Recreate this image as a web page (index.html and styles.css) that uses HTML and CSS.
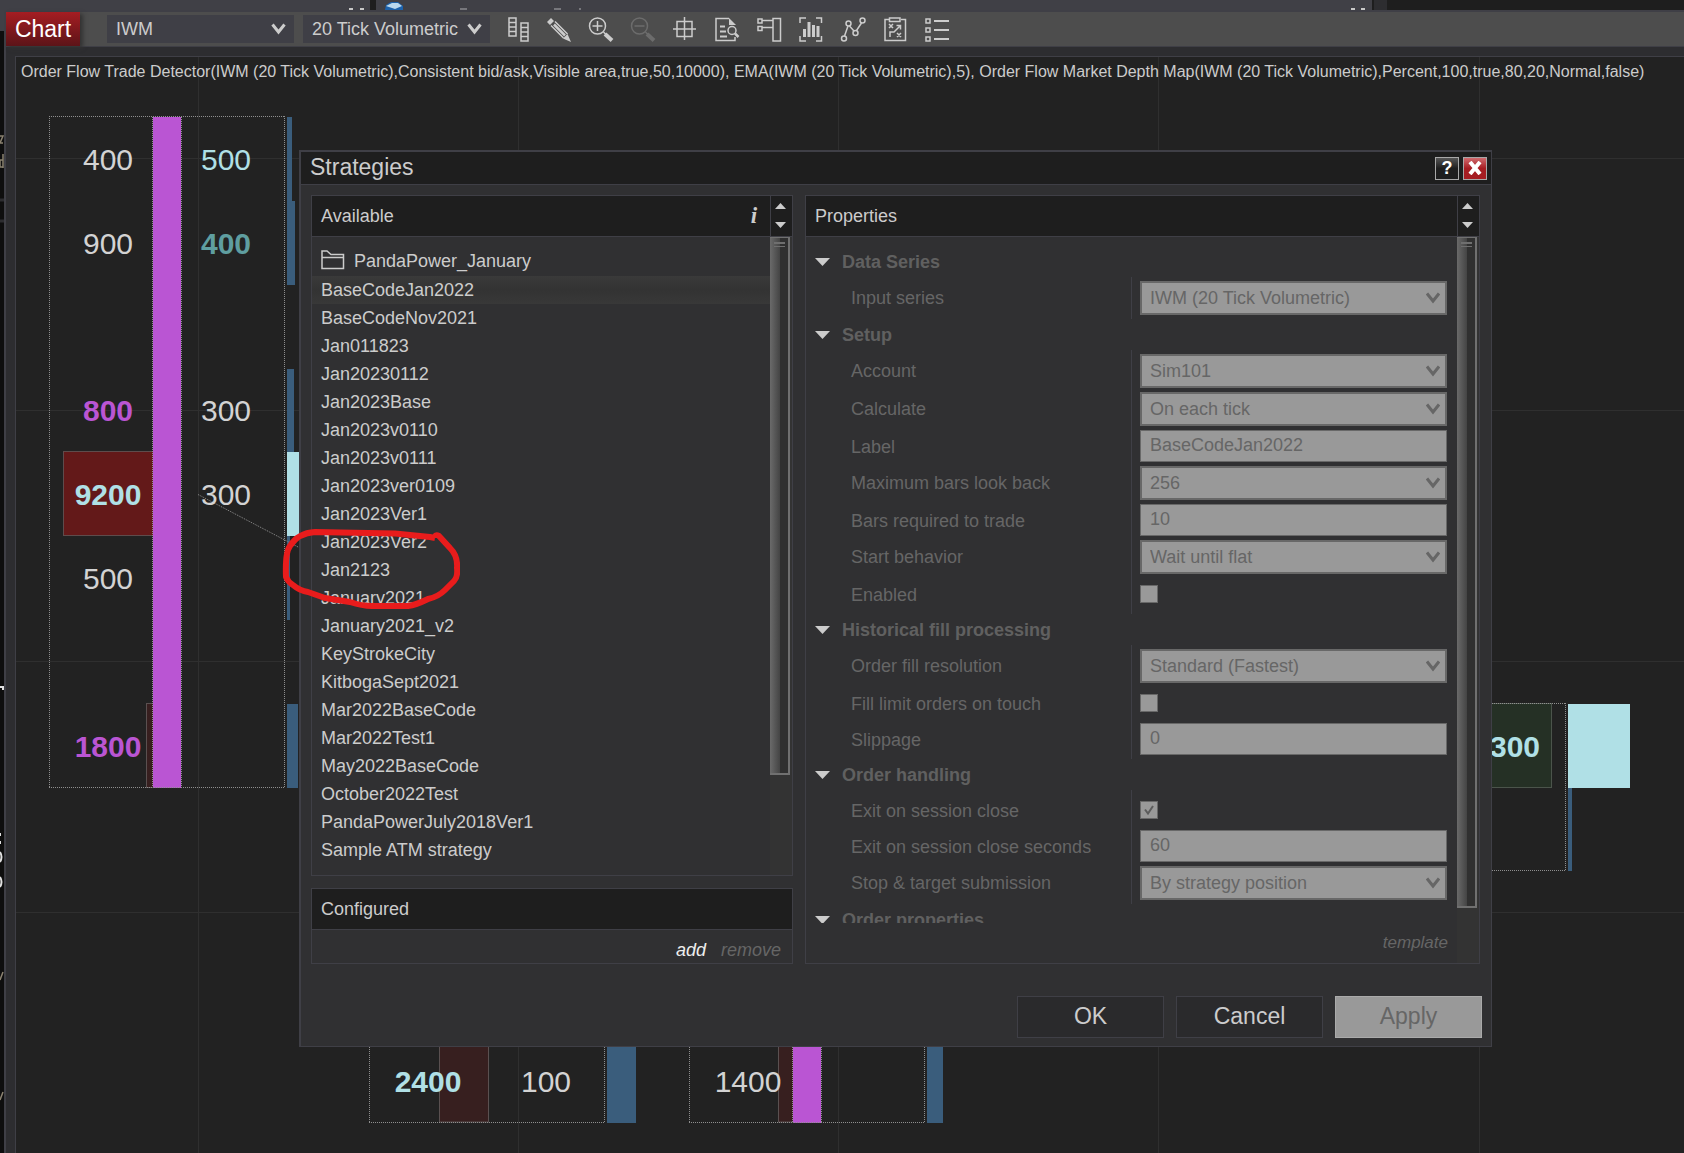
FILE: index.html
```html
<!DOCTYPE html>
<html lang="en">
<head>
<meta charset="utf-8">
<title>Chart - Strategies</title>
<link rel="stylesheet" href="styles.css">
</head>
<body>
<svg class="symbols" width="0" height="0" aria-hidden="true">
  <symbol id="chevron" viewBox="0 0 14 12"><path d="M1 1.5L7 9L13 1.5" fill="none" stroke="currentColor" stroke-width="3"/></symbol>
  <symbol id="arrow-down" viewBox="0 0 15 8"><path d="M0 0H15L7.5 8Z" fill="currentColor"/></symbol>
  <symbol id="arrow-up" viewBox="0 0 15 8"><path d="M0 8H15L7.5 0Z" fill="currentColor"/></symbol>
</svg>

<div class="desktop">
  <div class="behind-top" aria-hidden="true">
    <svg width="100%" height="10">
      <rect x="370" width="6" height="10" fill="#1e1e1e"/>
      <rect x="1372" width="2" height="10" fill="#1e1e1e"/>
      <rect x="1374" width="13" height="10" fill="#2d2d30"/>
      <rect x="1387" width="100%" height="10" fill="#1e1e1e"/>
      <path d="M349 9h4M360 9h4M1351 9h4M1361 9h4" stroke="#c8c8c8" stroke-width="2"/>
      <path d="M460 9h7M554 9h7M579 9h2" stroke="#77777c" stroke-width="2"/>
      <path d="M385 10L386 5L391 2H398L403 6V10Z" fill="#1d62ab"/>
      <path d="M386 6L392 3H398L402 6L395 9Z" fill="#b9d8ee"/>
    </svg>
  </div>
  <div class="behind-left" aria-hidden="true">
    <svg width="4" height="100%">
      <rect width="4" height="21" fill="#404046"/>
      <path d="M0 190h4M0 211h4" stroke="#2d2d30" stroke-width="3"/>
      <g fill="none" stroke="#8b8270" stroke-width="1.5"><path d="M0 126h3L0 133h3M3 144V158M3 150H0V157H3"/><path d="M3 962L0 970M3 1082L0 1090"/></g>
      <g fill="none" stroke="#e0e0e0" stroke-width="2"><path d="M0 677h3v3M0 823v3M0 831v3M0 842q3 5 0 10M0 867q3 5 0 10"/></g>
    </svg>
  </div>

  <main class="window">
    <header class="toolbar">
      <h1 class="tab">Chart</h1>
      <div class="picks">
        <div class="pick"><select aria-label="Instrument"><option>IWM</option></select><svg width="15" height="12"><use href="#chevron"/></svg></div>
        <div class="pick"><select aria-label="Interval"><option>20 Tick Volumetric</option></select><svg width="15" height="12"><use href="#chevron"/></svg></div>
      </div>
      <div class="tools">
        <button class="tool" aria-label="Chart trader"><svg viewBox="0 0 26 26"><path d="M3 2H10V20H3ZM3 6.5H10M3 11H10M3 15.5H10M15 7H22V25H15ZM15 11.5H22M15 16H22M15 20.5H22"/></svg></button>
        <button class="tool" aria-label="Drawing tools"><svg viewBox="0 0 26 26"><path class="fill" d="M-1 6L3 2L6 5L2 9ZM23 26L15 22.500L19.500 18Z"/><path d="M3 9.500L15.500 22M7 5.500L19.500 18"/><path d="M6 8.500L17 19.500" stroke-width="2.500"/></svg></button>
        <button class="tool" aria-label="Zoom in"><svg viewBox="0 0 26 26"><circle cx="7.500" cy="10" r="8"/><path d="M2.500 10H12.500M7.500 5V15"/><path d="M13.500 16L16 18.500"/><path d="M15 18L22 24.500" stroke-width="4"/></svg></button>
        <button class="tool" aria-label="Zoom out" disabled><svg viewBox="0 0 26 26"><circle cx="7.500" cy="10" r="8"/><path d="M2.500 10H12.500"/><path d="M13.500 16L16 18.500"/><path d="M15 18L22 24.500" stroke-width="4"/></svg></button>
        <button class="tool" aria-label="Crosshair"><svg viewBox="0 0 26 26"><path d="M3 5.500H18V20.500H3ZM10.500 1V24M-1 13H22"/></svg></button>
        <button class="tool" aria-label="Data box"><svg viewBox="0 0 26 26"><path d="M13 2.500H0V24.500H19V21"/><path class="fill" d="M13 2L20 9H13Z"/><path d="M4 10.500H9M4 15.500H10M4 20.500H11" stroke-width="2"/><circle cx="16" cy="14.500" r="4"/><path d="M19 17.500L22.500 21" stroke-width="2.500"/></svg></button>
        <button class="tool" aria-label="Properties link"><svg viewBox="0 0 26 26"><path d="M0 3H4V7H0ZM0 10.500H4V14.500H0ZM4 4.500H15M4 11.500H15M15 2.500H22.500V25H15Z"/></svg></button>
        <button class="tool" aria-label="Indicators"><svg viewBox="0 0 26 26"><path d="M0 7V2H6M16 2H21.500V7M0 20V25H6M16 25H21.500V20"/><path d="M4.500 13V21M9 6V21M13.500 9V21M18 10V21" stroke-width="3"/></svg></button>
        <button class="tool" aria-label="Strategies"><svg viewBox="0 0 26 26"><circle cx="2" cy="22.500" r="2.500"/><circle cx="6.500" cy="7.500" r="2.500"/><circle cx="13.500" cy="17" r="2.500"/><circle cx="20.500" cy="4.500" r="2.500"/><path d="M2.500 20L6 10M7.500 10L12 15M14.500 14.500L19.500 7"/></svg></button>
        <button class="tool" aria-label="Strategy performance"><svg viewBox="0 0 26 26"><path d="M5 3.500H1V24.500H21.500V3.500H17M5.500 2H16V5.500H5.500ZM5 8L9 12M9 8L5 12M13 17L17 21M17 17L13 21M6 21V16H10L16 10M12.500 9.500H16.500V13.500"/></svg></button>
        <button class="tool" aria-label="Menu"><svg viewBox="0 0 26 26"><path d="M0 3H4V7H0ZM0 12H4V16H0ZM0 21H4V25H0Z"/><path d="M8 5H23M8 14H23M8 23H23" stroke-width="2"/></svg></button>
      </div>
    </header>

    <section class="chart">
      <svg class="plot" width="100%" height="100%" role="img" aria-label="Volumetric chart">
        <g class="grid">
          <path d="M182.500 0V1200M502.500 0V1200M822.500 0V1200M1142.500 0V1200M1463.500 0V1200"/>
          <path d="M0 101.500H2400M0 353.500H2400M0 604.500H2400M0 855.500H2400"/>
        </g>
        <!-- first bar -->
        <rect class="ask" x="47.500" y="394.500" width="92" height="84"/>
        <rect class="dim" x="130.500" y="646.500" width="20" height="84"/>
        <rect class="poc" x="137" y="60" width="28" height="671"/>
        <path class="outline" d="M33 59.500H269M33 730.500H269M33.500 59V731M268.500 59V731M136.500 60V730M165.500 60V730"/>
        <path class="depth" d="M271 60h5v84h3v84h-8zM271 312h7v83h-7zM271 479h3v84h-3zM271 647h11v84h-11z"/>
        <rect class="peak" x="271" y="395" width="40" height="84"/>
        <path class="outline" d="M182 437.500L284 491"/>
        <!-- bars below the dialog -->
        <rect class="dim" x="423.500" y="900" width="49" height="165"/>
        <path class="outline" d="M353.500 900V1066M353 1065.500H589M588.500 900V1066"/>
        <rect class="dim" x="762.500" y="900" width="20" height="165"/>
        <rect class="poc" x="777" y="900" width="28" height="166"/>
        <path class="outline" d="M673.500 900V1066M673 1065.500H909M908.500 900V1066M776.500 900V1065M805.500 900V1065"/>
        <path class="depth" d="M591 900h29v166h-29zM911 900h16v166h-16z"/>
        <!-- last bar -->
        <rect class="bid" x="1400" y="646.500" width="135.500" height="84"/>
        <path class="outline" d="M1400 646.500H1550M1549.500 646V814M1400 813.500H1550"/>
        <rect class="peak" x="1552" y="647" width="62" height="84"/>
        <path class="depth" d="M1552 731h4v83h-4z"/>
        <g class="volume">
          <text x="92" y="113">400</text><text x="210" y="113" class="light">500</text>
          <text x="92" y="197">900</text><text x="210" y="197" class="teal">400</text>
          <text x="92" y="364" class="violet">800</text><text x="210" y="364">300</text>
          <text x="92" y="448" class="light strong">9200</text><text x="210" y="448">300</text>
          <text x="92" y="532">500</text>
          <text x="92" y="700" class="violet">1800</text>
          <text x="412" y="1035" class="light strong">2400</text><text x="530" y="1035">100</text>
          <text x="732" y="1035">1400</text>
          <text x="1499" y="700" class="light strong">300</text>
        </g>
      </svg>
      <p class="caption">Order Flow Trade Detector(IWM (20 Tick Volumetric),Consistent bid/ask,Visible area,true,50,10000), EMA(IWM (20 Tick Volumetric),5), Order Flow Market Depth Map(IWM (20 Tick Volumetric),Percent,100,true,80,20,Normal,false)</p>
    </section>
  </main>

  <div class="dialog" role="dialog" aria-labelledby="dialog-title">
    <header class="titlebar">
      <h2 id="dialog-title">Strategies</h2>
      <button class="help" aria-label="Help">?</button>
      <button class="close" aria-label="Close"><svg width="14" height="14" viewBox="0 0 14 14"><path d="M2 1L12 13M12 1L2 13" stroke="#fff" stroke-width="4"/></svg></button>
    </header>

    <div class="columns">
      <div class="left">
        <section class="panel available">
          <div class="panel-head">
            <h3>Available</h3>
            <button class="info" aria-label="Info">i</button>
            <div class="spin"><svg width="11" height="6"><use href="#arrow-up"/></svg><svg width="11" height="6"><use href="#arrow-down"/></svg></div>
          </div>
          <div class="panel-body">
            <ul class="list">
              <li class="folder"><svg width="24" height="20" viewBox="0 0 24 20"><path d="M1 18.500V1H6L10 4.500H22.500V18.500ZM1 7.500H22.500" fill="none" stroke="#ccc" stroke-width="1.500"/></svg>PandaPower_January</li>
              <li class="selected">BaseCodeJan2022</li>
              <li>BaseCodeNov2021</li>
              <li>Jan011823</li>
              <li>Jan20230112</li>
              <li>Jan2023Base</li>
              <li>Jan2023v0110</li>
              <li>Jan2023v0111</li>
              <li>Jan2023ver0109</li>
              <li>Jan2023Ver1</li>
              <li>Jan2023Ver2</li>
              <li>Jan2123</li>
              <li>January2021</li>
              <li>January2021_v2</li>
              <li>KeyStrokeCity</li>
              <li>KitbogaSept2021</li>
              <li>Mar2022BaseCode</li>
              <li>Mar2022Test1</li>
              <li>May2022BaseCode</li>
              <li>October2022Test</li>
              <li>PandaPowerJuly2018Ver1</li>
              <li>Sample ATM strategy</li>
            </ul>
            <div class="track"><div class="thumb short"></div></div>
          </div>
        </section>

        <section class="panel">
          <div class="panel-head"><h3>Configured</h3></div>
          <div class="actions"><a href="#add">add</a><a class="off" aria-disabled="true" href="#remove">remove</a></div>
        </section>
      </div>

      <section class="panel properties">
        <div class="panel-head">
          <h3>Properties</h3>
          <div class="spin"><svg width="11" height="6"><use href="#arrow-up"/></svg><svg width="11" height="6"><use href="#arrow-down"/></svg></div>
        </div>
        <div class="panel-body">
          <div class="props">
            <form class="fields">
              <h4 class="first"><svg width="15" height="8"><use href="#arrow-down"/></svg>Data Series</h4>
              <div class="group">
                <label for="series">Input series</label><div class="drop"><select id="series" disabled><option>IWM (20 Tick Volumetric)</option></select><svg width="14" height="12"><use href="#chevron"/></svg></div>
              </div>
              <h4><svg width="15" height="8"><use href="#arrow-down"/></svg>Setup</h4>
              <div class="group">
                <label for="account">Account</label><div class="drop"><select id="account" disabled><option>Sim101</option></select><svg width="14" height="12"><use href="#chevron"/></svg></div>
                <label for="calculate">Calculate</label><div class="drop"><select id="calculate" disabled><option>On each tick</option></select><svg width="14" height="12"><use href="#chevron"/></svg></div>
                <label for="label">Label</label><input type="text" id="label" value="BaseCodeJan2022" disabled>
                <label for="lookback">Maximum bars look back</label><div class="drop"><select id="lookback" disabled><option>256</option></select><svg width="14" height="12"><use href="#chevron"/></svg></div>
                <label for="required">Bars required to trade</label><input type="text" id="required" value="10" disabled>
                <label for="start">Start behavior</label><div class="drop"><select id="start" disabled><option>Wait until flat</option></select><svg width="14" height="12"><use href="#chevron"/></svg></div>
                <label for="enabled">Enabled</label><div class="tick"><input type="checkbox" id="enabled" disabled></div>
              </div>
              <h4><svg width="15" height="8"><use href="#arrow-down"/></svg>Historical fill processing</h4>
              <div class="group">
                <label for="resolution">Order fill resolution</label><div class="drop"><select id="resolution" disabled><option>Standard (Fastest)</option></select><svg width="14" height="12"><use href="#chevron"/></svg></div>
                <label for="touch">Fill limit orders on touch</label><div class="tick"><input type="checkbox" id="touch" disabled></div>
                <label for="slippage">Slippage</label><input type="text" id="slippage" value="0" disabled>
              </div>
              <h4><svg width="15" height="8"><use href="#arrow-down"/></svg>Order handling</h4>
              <div class="group">
                <label for="exit">Exit on session close</label><div class="tick"><input type="checkbox" id="exit" checked disabled><svg width="18" height="18" viewBox="0 0 18 18"><path d="M5 8.500L8 12.500L13 5" fill="none" stroke="#5c5c5c" stroke-width="2"/></svg></div>
                <label for="seconds">Exit on session close seconds</label><input type="text" id="seconds" value="60" disabled>
                <label for="submission">Stop &amp; target submission</label><div class="drop"><select id="submission" disabled><option>By strategy position</option></select><svg width="14" height="12"><use href="#chevron"/></svg></div>
              </div>
              <h4><svg width="15" height="8"><use href="#arrow-down"/></svg>Order properties</h4>
            </form>
            <a class="template" href="#template">template</a>
          </div>
          <div class="track"><div class="thumb long"></div></div>
        </div>
      </section>
    </div>

    <footer class="buttons">
      <button>OK</button>
      <button>Cancel</button>
      <button disabled>Apply</button>
    </footer>
  </div>

  <svg class="marker" width="180" height="90" viewBox="0 0 180 90" aria-hidden="true">
    <path d="M155 18L150 17L115 13.500L35 12Q18 13 10 26Q5 32 6 57Q8 62 13 65Q20 71 28 72L45 78L70 82Q82 86 92 86H128Q136 85 148 79Q158 77 165 70L174 61Q178 57 177 48Q178 36 170 28L159 16Q155 14 155 18" fill="none" stroke="#e81c1c" stroke-width="6" stroke-linejoin="round"/>
  </svg>
</div>
</body>
</html>
```

FILE: styles.css
```css
* { box-sizing: border-box; }

body {
  margin: 0;
  background: #0e0e0e;
  color: #ccc;
  font: 18px/28px "Liberation Sans", Arial, sans-serif;
}

h1, h2, h3, h4, p, ul { margin: 0; padding: 0; font-weight: normal; }
button, input, select { font: inherit; color: inherit; margin: 0; border-radius: 0; }
.symbols { position: absolute; }

.desktop {
  position: relative;
  display: grid;
  grid-template: 10px 1fr / 4px 1fr;
  min-height: 100vh;
  overflow: hidden;
}
.behind-top { grid-column: 1 / 3; background: #404046; height: 10px; overflow: hidden; }
.behind-top svg { display: block; }
.behind-left { background: #0e0e0e; position: relative; }
.behind-left svg { position: absolute; inset: 0; }

.window {
  display: flex;
  flex-direction: column;
  min-width: 0;
  background: #2d2d30;
  border: solid #3f3f46;
  border-width: 2px 0 0 2px;
}

.toolbar {
  display: flex;
  align-items: center;
  height: 35px;
  background: #4d4d4d;
  border-bottom: 1px solid #3f3f46;
}
.tab {
  align-self: stretch;
  width: 74px;
  color: #fff;
  font-size: 23px;
  line-height: 34px;
  text-align: center;
  background: linear-gradient(#a51d22, #5c1418);
  box-shadow: 3px 2px 4px #333;
}
.picks { display: flex; gap: 9px; margin: 0 16px 0 27px; }
.pick { display: grid; align-items: center; }
.pick > *, .drop > * { grid-area: 1 / 1; }
.pick select {
  appearance: none;
  width: 187px;
  height: 28px;
  padding: 0 9px;
  border: 0;
  background: #3f3f46;
  color: #ccc;
}
.pick svg { justify-self: end; margin-right: 8px; pointer-events: none; }
.tools { display: flex; gap: 16px; }
.tool { display: block; width: 26px; height: 26px; padding: 0; border: 0; background: none; color: #ccc; }
.tool:disabled { color: #6c6c6c; }
.tool svg { display: block; overflow: visible; fill: none; stroke: currentColor; stroke-width: 1.5; }
.tool .fill { fill: currentColor; stroke: none; }

.chart {
  position: relative;
  flex: 1;
  margin: 9px 0 0 9px;
  border: solid #3f3f46;
  border-width: 1px 0 0 1px;
  background: #222;
}
.plot { position: absolute; inset: 0; }
.caption { position: relative; padding: 1px 5px; font-size: 16px; white-space: nowrap; }
.grid path { fill: none; stroke: #2f2f2f; }
.outline { fill: none; stroke: #8f8f8f; stroke-dasharray: 1 1; }
.ask { fill: #631919; stroke: #5e4c4c; }
.dim { fill: #371f1f; stroke: #5a5050; }
.bid { fill: #253025; stroke: #4b544b; }
.poc { fill: #ba55d3; }
.depth { fill: #3a5d7c; }
.peak { fill: #b0e0e6; }
.volume { font-size: 30px; fill: #d3d3d3; text-anchor: middle; }
.light { fill: #b0e0e6; }
.teal { fill: #5f9ea0; font-weight: bold; }
.violet { fill: #ba55d3; font-weight: bold; }
.strong { font-weight: bold; }

.dialog {
  position: absolute;
  top: 150px;
  left: 299px;
  right: 192px;
  background: #303032;
  border: solid #3f3f46;
  border-width: 2px 1px 1px 2px;
}
.titlebar {
  display: flex;
  align-items: center;
  gap: 4px;
  height: 33px;
  padding: 0 4px 0 9px;
  background: #1e1e1e;
  border-bottom: 1px solid #3f3f46;
}
.titlebar h2 { flex: 1; align-self: flex-start; font-size: 23px; line-height: 30px; }
.titlebar button {
  display: grid;
  place-items: center;
  width: 24px;
  height: 23px;
  padding: 0;
  border: 1px solid #a8a8a8;
  color: #fff;
  font-weight: bold;
  line-height: 20px;
}
.help { background: linear-gradient(#555, #1e1e1e 50%); }
.titlebar .close { background: linear-gradient(#d06a6e, #a51d22 50%); }

.columns {
  display: grid;
  grid-template-columns: 482fr 675fr;
  gap: 12px;
  padding: 10px 11px 0 10px;
}
.left { display: flex; flex-direction: column; gap: 12px; min-width: 0; }
.panel { border: 1px solid #3f3f46; min-width: 0; }
.available { flex: 1; display: flex; flex-direction: column; }
.panel-head {
  display: flex;
  height: 41px;
  background: #1e1e1e;
  border-bottom: 1px solid #3f3f46;
}
.panel-head h3 { flex: 1; padding-left: 9px; font-size: 18px; line-height: 40px; }
.info {
  width: 32px;
  padding: 0;
  border: 0;
  background: none;
  font: italic bold 23px/34px "Liberation Serif", serif;
}
.spin {
  display: flex;
  flex-direction: column;
  align-items: center;
  justify-content: space-between;
  width: 22px;
  padding: 7px 2px 8px 0;
  border-left: 1px solid #3f3f46;
}
.panel-body { display: flex; flex: 1; }
.list { flex: 1; padding: 10px 0; list-style: none; }
.list li { height: 28px; padding-left: 9px; }
.list .folder { display: flex; align-items: flex-start; gap: 9px; height: 29px; }
.folder svg { margin-top: 3px; }
.selected { background: linear-gradient(#3a3a3a, #333 50%, #383838); }
.track { width: 22px; padding-right: 2px; background: #333; }
.thumb {
  border: solid #707070;
  border-width: 1px 2px 2px 0;
  background:
    linear-gradient(#6f6f6f, #6f6f6f) 4px 4px / 11px 2px no-repeat,
    linear-gradient(#6f6f6f, #6f6f6f) 4px 8px / 11px 1px no-repeat,
    linear-gradient(90deg, #6a6a6a, #444 10px, #303030 10px);
}
.short { height: 538px; }
.long { height: 671px; }
.actions { display: flex; justify-content: flex-end; gap: 15px; padding: 6px 11px 0; height: 33px; }
a { color: #eee; font-style: italic; text-decoration: none; }
.off, .template { color: #666; }

.properties { display: flex; flex-direction: column; }
.props { flex: 1; display: flex; flex-direction: column; min-width: 0; }
.fields { height: 686px; padding: 0 10px 0 9px; overflow: hidden; color: #666; }
.fields h4 {
  display: flex;
  align-items: center;
  gap: 12px;
  height: 31px;
  color: #606060;
  font-weight: bold;
}
.fields .first { height: 40px; padding-top: 9px; }
.fields h4 svg { color: #ccc; }
.group {
  display: grid;
  grid-template-columns: 325fr 307fr;
  row-gap: 4px;
  padding: 4px 0;
  background: linear-gradient(#3f3f46, #3f3f46) 50% 0 / 1px 100% no-repeat;
}
.group label { padding-left: 36px; line-height: 34px; height: 32px; }
.drop { display: grid; align-items: center; }
.drop svg { justify-self: end; margin-right: 7px; pointer-events: none; }
.fields select, .fields input[type="text"] {
  appearance: none;
  width: 100%;
  padding: 0 8px;
  border: 2px solid #686868;
  background: #999;
  color: #666;
  opacity: 1;
}
.fields select { height: 34px; }
.fields input[type="text"] { height: 32px; padding: 0 9px 1px; border-width: 1px; }
.tick { display: grid; align-content: center; height: 32px; }
.tick > * { grid-area: 1 / 1; }
.tick input { appearance: none; width: 18px; height: 18px; border: 1px solid #686868; background: #999; }
.template { align-self: flex-end; padding: 6px 9px; font-size: 17px; }

.buttons { display: flex; justify-content: flex-end; gap: 12px; padding: 32px 9px 8px; }
.buttons button {
  width: 147px;
  height: 42px;
  padding: 0 0 2px;
  border: 1px solid #3f3f46;
  background: #2a2a2c;
  font-size: 23px;
}
.buttons button:disabled { background: #999; border-color: #aaa; color: #666; }

.marker { position: absolute; left: 280px; top: 520px; pointer-events: none; }
```
